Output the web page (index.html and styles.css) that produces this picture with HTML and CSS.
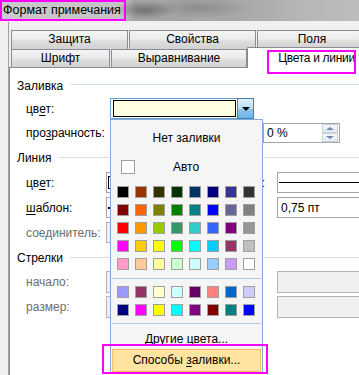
FILE: index.html
```html
<!DOCTYPE html>
<html lang="ru">
<head>
  <meta charset="UTF-8">
  <title>Формат примечания</title>
  <link rel="stylesheet" href="styles.css">
</head>
<body>
  <div class="titlebar">
    <span class="title">Формат примечания</span>
  </div>

  <div class="frame">
    <div class="tab-row">
      <div class="tab tab-protect">Защита</div>
      <div class="tab tab-props">Свойства</div>
      <div class="tab tab-margins">Поля</div>
    </div>
    <div class="tab-row">
      <div class="tab tab-font">Шрифт</div>
      <div class="tab tab-align">Выравнивание</div>
      <div class="tab tab-active">Цвета и линии</div>
    </div>

    <div class="panel">
      <div class="group-head head-fill"><span>Заливка</span><i class="group-line"></i></div>

      <div class="row row-fill-color">
        <span class="lbl lbl-wide">цв<u>е</u>т:</span>
        <div class="combo">
          <div class="combo-field"><span class="combo-swatch"></span></div>
          <div class="combo-btn"><i class="tri-down"></i></div>
        </div>
      </div>

      <div class="row row-transp">
        <span class="lbl">про<u>з</u>рачность:</span>
        <span class="slider-space"></span>
        <div class="field field-transp">
          <span class="field-text">0 %</span>
          <div class="spin">
            <span class="spin-btn"><i class="tri-up"></i></span>
            <span class="spin-btn"><i class="tri-dn"></i></span>
          </div>
        </div>
      </div>

      <div class="group-head head-line"><span>Линия</span><i class="group-line"></i></div>

      <div class="row row-line">
        <span class="lbl">цв<u>е</u>т:</span>
        <div class="field field-left"><span class="color-black"></span></div>
        <span class="sublbl">тип:</span>
        <div class="field field-right"><span class="line-sample"></span></div>
      </div>

      <div class="row row-line">
        <span class="lbl"><u>ш</u>аблон:</span>
        <div class="field field-left"><span class="dash-sample"></span></div>
        <span class="sub-gap"></span>
        <div class="field field-right"><span class="field-text">0,75 пт</span></div>
      </div>

      <div class="row row-line">
        <span class="lbl lbl-off">соединитель:</span>
        <div class="field field-left field-off"></div>
      </div>

      <div class="group-head head-arrows"><span>Стрелки</span><i class="group-line"></i></div>

      <div class="row row-arrow">
        <span class="lbl lbl-off">начало:</span>
        <div class="field field-left field-off"></div>
        <span class="sub-gap"></span>
        <div class="field field-right field-off"></div>
      </div>

      <div class="row row-arrow row-arrow2">
        <span class="lbl lbl-off">размер:</span>
        <div class="field field-left field-off"></div>
        <span class="sub-gap"></span>
        <div class="field field-right field-off"></div>
      </div>
    </div>
  </div>

  <div class="dropdown">
    <div class="dd-none">Нет заливки</div>
    <div class="dd-auto"><span class="check"></span><span class="dd-auto-text">Авто</span></div>
    <div class="palette">
      <span class="sw" style="background:#000000"></span>
      <span class="sw" style="background:#993300"></span>
      <span class="sw" style="background:#333300"></span>
      <span class="sw" style="background:#003300"></span>
      <span class="sw" style="background:#003366"></span>
      <span class="sw" style="background:#000080"></span>
      <span class="sw" style="background:#333399"></span>
      <span class="sw" style="background:#333333"></span>
      <span class="sw" style="background:#800000"></span>
      <span class="sw" style="background:#ff6600"></span>
      <span class="sw" style="background:#808000"></span>
      <span class="sw" style="background:#008000"></span>
      <span class="sw" style="background:#008080"></span>
      <span class="sw" style="background:#0000ff"></span>
      <span class="sw" style="background:#666699"></span>
      <span class="sw" style="background:#808080"></span>
      <span class="sw" style="background:#ff0000"></span>
      <span class="sw" style="background:#ff9900"></span>
      <span class="sw" style="background:#99cc00"></span>
      <span class="sw" style="background:#339966"></span>
      <span class="sw" style="background:#33cccc"></span>
      <span class="sw" style="background:#3366ff"></span>
      <span class="sw" style="background:#800080"></span>
      <span class="sw" style="background:#969696"></span>
      <span class="sw" style="background:#ff00ff"></span>
      <span class="sw" style="background:#ffcc00"></span>
      <span class="sw" style="background:#ffff00"></span>
      <span class="sw" style="background:#00ff00"></span>
      <span class="sw" style="background:#00ffff"></span>
      <span class="sw" style="background:#00ccff"></span>
      <span class="sw" style="background:#993366"></span>
      <span class="sw" style="background:#c0c0c0"></span>
      <span class="sw" style="background:#ff99cc"></span>
      <span class="sw" style="background:#ffcc99"></span>
      <span class="sw" style="background:#ffff99"></span>
      <span class="sw" style="background:#ccffcc"></span>
      <span class="sw" style="background:#ccffff"></span>
      <span class="sw" style="background:#99ccff"></span>
      <span class="sw" style="background:#cc99ff"></span>
      <span class="sw" style="background:#ffffff"></span>
    </div>
    <div class="dd-sep"></div>
    <div class="palette palette-extra">
      <span class="sw" style="background:#9999ff"></span>
      <span class="sw" style="background:#993366"></span>
      <span class="sw" style="background:#ffffcc"></span>
      <span class="sw" style="background:#ccffff"></span>
      <span class="sw" style="background:#660066"></span>
      <span class="sw" style="background:#ff8080"></span>
      <span class="sw" style="background:#0066cc"></span>
      <span class="sw" style="background:#ccccff"></span>
      <span class="sw" style="background:#000080"></span>
      <span class="sw" style="background:#ff00ff"></span>
      <span class="sw" style="background:#ffff00"></span>
      <span class="sw" style="background:#00ffff"></span>
      <span class="sw" style="background:#800080"></span>
      <span class="sw" style="background:#800000"></span>
      <span class="sw" style="background:#008080"></span>
      <span class="sw" style="background:#0000ff"></span>
    </div>
    <div class="dd-sep dd-sep2"></div>
    <div class="dd-more">Дру<u>г</u>ие цвета...</div>
    <div class="dd-fill">Способы <u>з</u>аливки...</div>
  </div>

  <div class="mark mark-tab"></div>
  <div class="mark mark-fill"></div>
</body>
</html>
```

FILE: styles.css
```css
* {
  box-sizing: border-box;
}

html, body {
  margin: 0;
  padding: 0;
}

body {
  position: relative;
  width: 359px;
  height: 375px;
  overflow: hidden;
  background: #f0f0f0;
  font-family: "Liberation Sans", Arial, sans-serif;
  font-size: 12px;
  color: #000;
}

u {
  text-decoration: underline;
  text-underline-offset: 2px;
}

/* title bar */
.titlebar {
  height: 21px;
  background:
    radial-gradient(ellipse 30px 9px at 145px 10px, rgba(80,80,80,0.6), rgba(80,80,80,0)),
    radial-gradient(ellipse 50px 10px at 200px 8px, rgba(110,110,110,0.45), rgba(110,110,110,0)),
    linear-gradient(to right, #cbcbcb 0, #c4c4c4 120px, #a3a3a3 135px, #a8a8a8 240px, #b6b6b6 300px, #bdbdbd 359px);
}

.title {
  display: block;
  width: 126px;
  height: 21px;
  border: 2px solid #ff00ff;
  padding-left: 1px;
  line-height: 16px;
  font-size: 12.5px;
  white-space: nowrap;
}

/* dialog frame and tabs */
.frame {
  width: 400px;
  height: 360px;
  margin: 1px 0 0 8px;
  padding-top: 8px;
  border-left: 1px solid #a0a0a0;
}

.tab-row {
  display: flex;
  align-items: flex-start;
  height: 19px;
  padding-left: 2px;
}

.tab-row + .tab-row {
  height: 18px;
}

.tab {
  flex: none;
  height: 19px;
  margin-right: 1px;
  border: 1px solid #898c95;
  border-bottom: none;
  background: linear-gradient(#f4f4f4, #ececec 45%, #dedede 55%, #d2d2d2);
  text-align: center;
  line-height: 17px;
  white-space: nowrap;
}

.tab-row + .tab-row .tab {
  height: 18px;
  line-height: 16px;
}

.tab-protect { width: 117px; }
.tab-props { width: 127px; }
.tab-margins { width: 110px; }
.tab-font { width: 99px; }
.tab-align { width: 136px; margin-right: 0; }

.tab-row + .tab-row .tab-active {
  position: relative;
  z-index: 1;
  width: 139px;
  height: 21px;
  margin-top: -2px;
  background: #fff;
  line-height: 20px;
  letter-spacing: -0.3px;
}

.panel {
  height: 320px;
  border-top: 1px solid #898c95;
  border-left: 1px solid #898c95;
  background: #fff;
}

/* groups and rows */
.group-head {
  display: flex;
  align-items: flex-start;
  height: 14px;
  padding-left: 7px;
  line-height: 14px;
}

.group-line {
  flex: 1;
  height: 1px;
  margin: 6px 0 0 7px;
  background: #d5dfe5;
}

.head-fill { margin-top: 11px; }
.head-fill .group-line { margin-top: 5px; }
.head-line { margin-top: 8px; }
.head-arrows { margin-top: 8px; }

.row {
  display: flex;
  align-items: center;
  height: 21px;
  padding-left: 16px;
  white-space: nowrap;
}

.row-fill-color { margin-top: 5px; }
.row-transp { height: 20px; margin-top: 4px; }
.head-line + .row { margin-top: 7px; }
.row-line + .row-line { margin-top: 4px; }
.row-arrow { height: 22px; margin-top: 6px; }
.row-arrow2 { margin-top: 3px; }

.lbl {
  flex: none;
  width: 80px;
}

.lbl-wide { width: 84px; }

.lbl-off { color: #6d6d6d; }

.sublbl {
  flex: none;
  width: 28px;
  margin-right: 12px;
  text-align: right;
}

.sub-gap {
  flex: none;
  width: 40px;
}

.field {
  display: flex;
  align-items: center;
  height: 100%;
  border: 1px solid #a5a5a5;
  background: #fff;
}

.field-left { width: 131px; }
.field-right { width: 100px; }

.field-off {
  background: #f0f0f0;
  border-color: #b4b4b4;
}

.field-text {
  padding-left: 3px;
}

.color-black {
  width: 40px;
  height: 13px;
  margin-left: 1px;
  border: 1px solid #000;
}

.dash-sample {
  width: 40px;
  height: 2px;
  margin-left: 1px;
  background: #000;
}

.line-sample {
  flex: 1;
  height: 1px;
  margin: 0 1px;
  background: #000;
}

/* fill colour combo */
.combo {
  display: flex;
  width: 144px;
  height: 21px;
  border: 1px solid #6f9fd8;
}

.combo-field {
  flex: 1;
  padding: 1px 1px 1px 2px;
  background: #fff;
}

.combo-swatch {
  display: block;
  height: 100%;
  border: 1px solid #000;
  background: #ffffe1;
}

.combo-btn {
  display: flex;
  align-items: center;
  justify-content: center;
  width: 17px;
  margin: -1px -1px -1px 0;
  border: 1px solid #3c7fb1;
  background: linear-gradient(#e3f1fb, #b9dcf6 50%, #8ec4ec 52%, #6fb3e6);
}

.tri-down {
  width: 0;
  height: 0;
  border-left: 4px solid transparent;
  border-right: 4px solid transparent;
  border-top: 4px solid #000;
}

/* transparency spinner */
.slider-space {
  flex: none;
  width: 157px;
}

.field-transp {
  width: 77px;
  justify-content: space-between;
}

.spin {
  display: flex;
  flex-direction: column;
  width: 16px;
  height: 100%;
  margin-right: 1px;
}

.spin-btn {
  flex: 1;
  display: flex;
  align-items: center;
  justify-content: center;
  border: 1px solid #c9d3de;
  background: linear-gradient(#f6f8fa, #e4e9ef);
}

.tri-up,
.tri-dn {
  width: 0;
  height: 0;
  border-left: 4px solid transparent;
  border-right: 4px solid transparent;
}

.tri-up { border-bottom: 3px solid #6a86ad; }
.tri-dn { border-top: 3px solid #6a86ad; }

/* colour dropdown */
.dropdown {
  position: absolute;
  left: 110px;
  top: 119px;
  width: 153px;
  height: 255px;
  border: 1px solid #86a8d8;
  background: #f5f5f5;
  z-index: 2;
}

.dd-none {
  height: 20px;
  margin-top: 8px;
  line-height: 20px;
  text-align: center;
}

.dd-auto {
  display: flex;
  align-items: center;
  height: 20px;
  margin-top: 9px;
  padding-left: 10px;
}

.check {
  width: 14px;
  height: 14px;
  border: 1px solid #a0a0a0;
  background: #fff;
}

.dd-auto-text {
  width: 102px;
  text-align: center;
}

.palette {
  display: grid;
  grid-template-columns: repeat(8, 12px);
  grid-auto-rows: 12px;
  gap: 6px;
  margin-top: 9px;
  padding-left: 6px;
}

.palette-extra {
  margin-top: 7px;
}

.sw {
  border: 1px solid #a0a0a0;
}

.dd-sep {
  height: 1px;
  margin: 8px 1px 0;
  background: #b3c9e7;
}

.dd-sep2 {
  margin-top: 7px;
}

.dd-more {
  height: 18px;
  margin-top: 6px;
  line-height: 18px;
  text-align: center;
}

.dd-fill {
  height: 23px;
  margin: 1px 1px 0;
  border: 1px solid #f6bc66;
  background: #fee4a0;
  line-height: 21px;
  text-align: center;
}

/* highlight marks */
.mark {
  position: absolute;
  border: 2px solid #ff00ff;
  z-index: 3;
}

.mark-tab {
  left: 267px;
  top: 50px;
  width: 89px;
  height: 24px;
}

.mark-fill {
  left: 102px;
  top: 344px;
  width: 166px;
  height: 30px;
}
```
